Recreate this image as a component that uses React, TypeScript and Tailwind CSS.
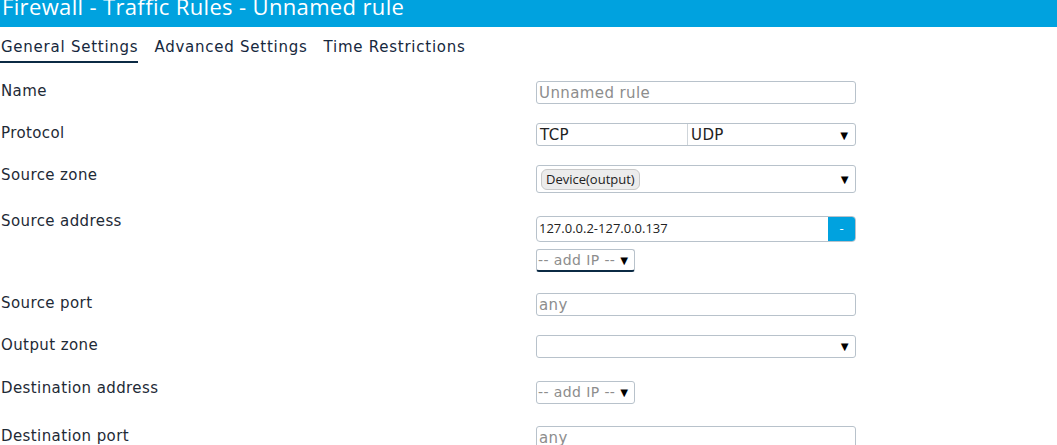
import React from "react";

const dv = { fontFamily: '"DejaVu Sans", "Open Sans", sans-serif', letterSpacing: "0.4px" };
const os = { fontFamily: '"Open Sans", "Liberation Sans", sans-serif' };

function Arrow() {
  return <span className="text-[13px] leading-none text-black" style={os}>▼</span>;
}

function Row({ label, children, mt, lmt = "" }: { label: string; children: React.ReactNode; mt: string; lmt?: string }) {
  return (
    <div className={`flex items-start ${mt}`}>
      <div className={`w-[536px] shrink-0 pl-[1px] text-[15px] leading-[20px] text-[#1e2a36] ${lmt}`} style={dv}>
        {label}
      </div>
      <div className="flex flex-col">{children}</div>
    </div>
  );
}

function TextBox({ placeholder }: { placeholder: string }) {
  return (
    <div
      className="flex h-[23px] w-[320px] items-center rounded-[3px] border border-[#b8c2cb] bg-white pl-[2px] pt-[1px] text-[15px] text-[#8d8d8d]"
      style={dv}
    >
      {placeholder}
    </div>
  );
}

function AddIp({ active }: { active?: boolean }) {
  return (
    <div
      className={`flex h-[23px] w-[99px] items-center justify-between rounded-[3px] border border-[#b8c2cb] bg-white pl-[1px] pr-[3px] text-[14px] text-[#8d8d8d] ${
        active ? "border-b-[2px] border-b-[#0b2a44]" : ""
      }`}
      style={dv}
    >
      <span>-- add IP --</span>
      <Arrow />
    </div>
  );
}

export default function App() {
  return (
    <div className="min-h-[445px] w-[1057px] overflow-hidden bg-white" style={os}>
      <div className="h-[27px] overflow-hidden bg-[#00a2df]">
        <div className="-mt-[9px] pl-[2px] text-[22px] leading-[30px] tracking-[0.35px] text-white">
          Firewall - Traffic Rules - Unnamed rule
        </div>
      </div>
      <div
        className="mt-[10px] flex gap-[16px] text-[15px] leading-[20px] text-[#16283d]"
        style={{ ...dv, letterSpacing: "0.75px" }}
      >
        <div className="border-b-2 border-[#0b2a44] pb-[4px] pl-[1px]">General Settings</div>
        <div>Advanced Settings</div>
        <div>Time Restrictions</div>
      </div>

      <Row label="Name" mt="mt-[18px]">
        <TextBox placeholder="Unnamed rule" />
      </Row>

      <Row label="Protocol" mt="mt-[19px]">
        <div
          className="flex h-[23px] w-[320px] items-center rounded-[3px] border border-[#b8c2cb] bg-white text-[15px] text-[#222]"
          style={dv}
        >
          <div className="flex h-full w-[151px] items-center border-r border-[#cfd5da] pl-[3px] pt-[1px]">TCP</div>
          <div className="flex flex-1 items-center justify-between pl-[3px] pr-[4px] pt-[1px]">
            <span>UDP</span>
            <Arrow />
          </div>
        </div>
      </Row>

      <Row label="Source zone" mt="mt-[19px]">
        <div className="flex h-[28px] w-[320px] items-center justify-between rounded-[3px] border border-[#b8c2cb] bg-white pl-[4px] pr-[4px]">
          <span className="rounded-[6px] border border-[#c9c9c9] bg-[#ececec] px-[4px] text-[13px] leading-[19px] text-[#222]">
            Device(output)
          </span>
          <Arrow />
        </div>
      </Row>

      <Row label="Source address" mt="mt-[23px]" lmt="-mt-[5px]">
        <div className="flex h-[26px] w-[320px] overflow-hidden rounded-[4px] border border-[#b8c2cb] bg-white">
          <div className="flex flex-1 items-center pl-[2px] text-[13px] text-[#222]">127.0.0.2-127.0.0.137</div>
          <div className="flex w-[27px] items-center justify-center bg-[#00a2df] text-[13px] text-white">-</div>
        </div>
        <div className="mt-[7px]">
          <AddIp active />
        </div>
      </Row>

      <Row label="Source port" mt="mt-[21px]">
        <TextBox placeholder="any" />
      </Row>

      <Row label="Output zone" mt="mt-[19px]">
        <div className="flex h-[23px] w-[320px] items-center justify-end rounded-[3px] border border-[#b8c2cb] bg-white pr-[4px]">
          <Arrow />
        </div>
      </Row>

      <Row label="Destination address" mt="mt-[23px]" lmt="-mt-[3px]">
        <AddIp />
      </Row>

      <Row label="Destination port" mt="mt-[22px]">
        <TextBox placeholder="any" />
      </Row>
    </div>
  );
}
